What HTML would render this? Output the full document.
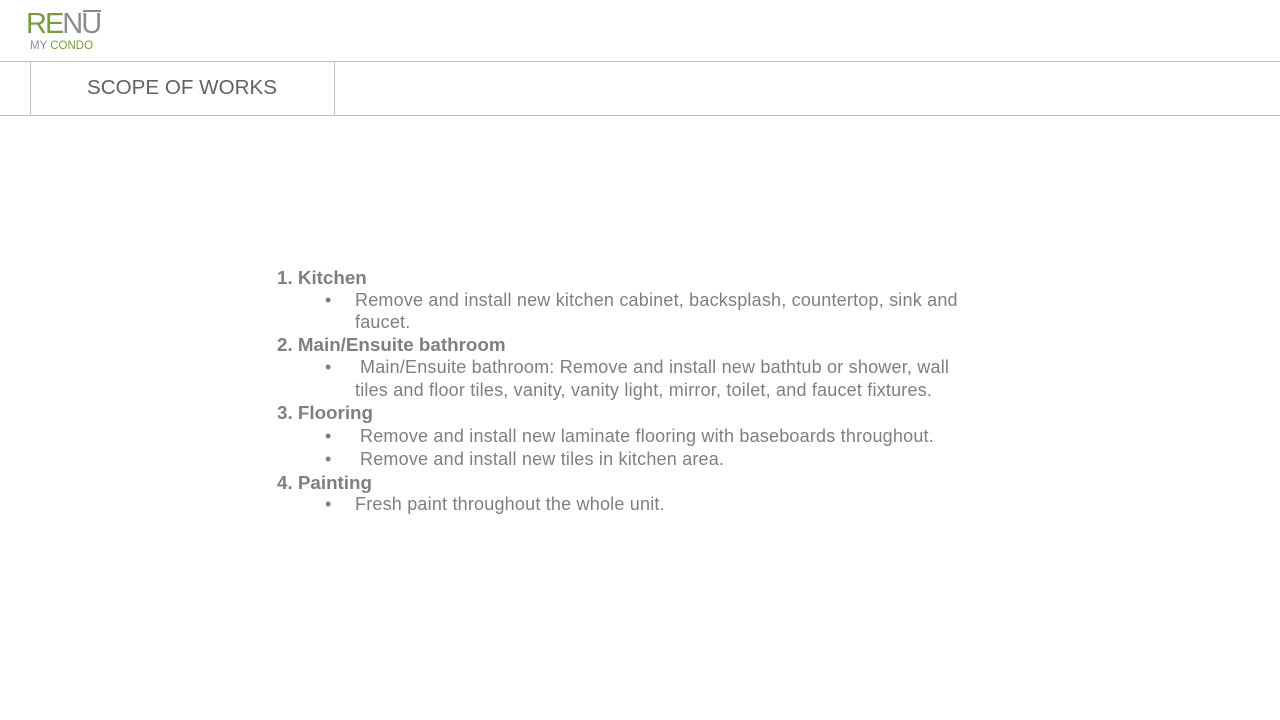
<!DOCTYPE html>
<html><head><meta charset="utf-8"><style>
body{margin:0;width:1280px;height:720px;background:#fff;position:relative;overflow:hidden;font-family:"Liberation Sans",sans-serif}
.a{position:absolute;white-space:nowrap}
.t{font-size:18px;color:#7f7f7f;letter-spacing:0.2px}
.h{font-size:18.8px;color:#7f7f7f;font-weight:bold;letter-spacing:0}
</style></head><body>
<div class="a" style="left:26px;top:8px;font-size:29px;letter-spacing:-2px;line-height:32px"><span style="color:#7a9a3e">RE</span><span style="color:#8a8d90">NU</span></div>
<div class="a" style="left:83px;top:10px;width:18px;height:2px;background:#8a8d90"></div>
<div class="a" style="left:30px;top:40px;font-size:11.5px;line-height:12px"><span style="color:#8a8d90">MY </span><span style="color:#7a9a3e">CONDO</span></div>
<div class="a" style="left:0;top:61px;width:1280px;height:1px;background:#c0c0c0"></div>
<div class="a" style="left:0;top:115px;width:1280px;height:1px;background:#c0c0c0"></div>
<div class="a" style="left:30px;top:62px;width:1px;height:53px;background:#c0c0c0"></div>
<div class="a" style="left:334px;top:62px;width:1px;height:53px;background:#c0c0c0"></div>
<div class="a" style="left:87px;top:76px;font-size:20.6px;color:#5f6266">SCOPE OF WORKS</div>
<div class="a h" style="left:277px;top:267px">1. Kitchen</div>
<div class="a t" style="left:325px;top:290px">•</div>
<div class="a t" style="left:355px;top:290px">Remove and install new kitchen cabinet, backsplash, countertop, sink and</div>
<div class="a t" style="left:355px;top:312px">faucet.</div>
<div class="a h" style="left:277px;top:334px">2. Main/Ensuite bathroom</div>
<div class="a t" style="left:325px;top:357px">•</div>
<div class="a t" style="left:360px;top:357px">Main/Ensuite bathroom: Remove and install new bathtub or shower, wall</div>
<div class="a t" style="left:355px;top:380px">tiles and floor tiles, vanity, vanity light, mirror, toilet, and faucet fixtures.</div>
<div class="a h" style="left:277px;top:402px">3. Flooring</div>
<div class="a t" style="left:325px;top:426px">•</div>
<div class="a t" style="left:360px;top:426px">Remove and install new laminate flooring with baseboards throughout.</div>
<div class="a t" style="left:325px;top:449px">•</div>
<div class="a t" style="left:360px;top:449px">Remove and install new tiles in kitchen area.</div>
<div class="a h" style="left:277px;top:472px">4. Painting</div>
<div class="a t" style="left:325px;top:494px">•</div>
<div class="a t" style="left:355px;top:494px">Fresh paint throughout the whole unit.</div>
</body></html>
